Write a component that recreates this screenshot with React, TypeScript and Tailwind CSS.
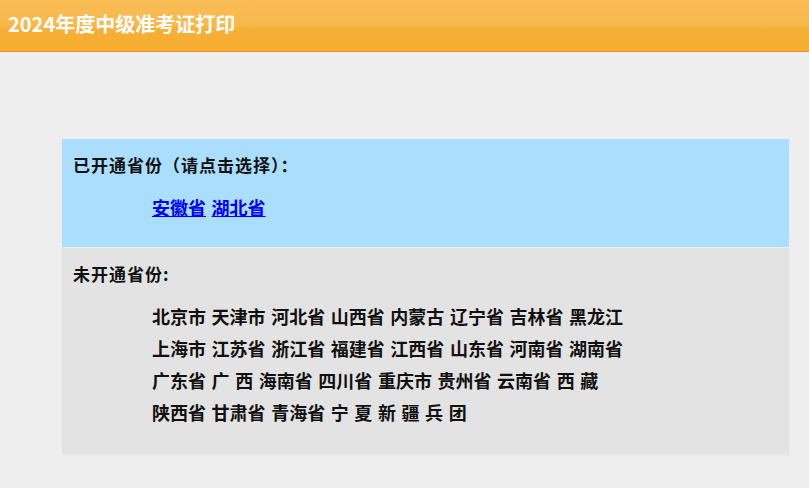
const font = { fontFamily: '"Noto Sans CJK SC", "Noto Sans", sans-serif' };

const opened = ["安徽省", "湖北省"];

const closedRows = [
  "北京市 天津市 河北省 山西省 内蒙古 辽宁省 吉林省 黑龙江",
  "上海市 江苏省 浙江省 福建省 江西省 山东省 河南省 湖南省",
  "广东省 广 西 海南省 四川省 重庆市 贵州省 云南省 西 藏",
  "陕西省 甘肃省 青海省 宁 夏 新 疆 兵 团",
];

export default function App() {
  return (
    <div className="min-h-[488px] w-full bg-[#eeeeee]" style={font}>
      {/* Header */}
      <header className="h-[52px] border-b border-[#e8961c] bg-[linear-gradient(to_bottom,#f9bd56_0%,#f8b84c_50%,#f6b036_56%,#f5ad30_100%)]">
        <div className="flex h-[51px] items-center pb-[3px] pl-2">
          <h1 className="text-[20px] font-bold text-white">2024年度中级准考证打印</h1>
        </div>
      </header>

      <div className="pl-[62px] pr-[20px] pt-[87px]">
        {/* Opened provinces */}
        <section className="h-[108px] bg-[#abdefd] px-[11px] pt-[10px]">
          <div className="text-[17px] font-bold leading-[32px] tracking-[1px] text-[#111]">
            已开通省份（请点击选择）：
          </div>
          <div className="mt-[10px] pl-[79px] text-[18px] font-bold leading-[32px] [word-spacing:1.5px]">
            {opened.map((p, i) => (
              <span key={p}>
                {i > 0 && " "}
                <a href="#" className="text-[#0000ff] underline underline-offset-[1px]">
                  {p}
                </a>
              </span>
            ))}
          </div>
        </section>

        {/* Closed provinces */}
        <section className="mt-[1px] h-[207px] bg-[#e3e3e3] px-[11px] pt-[10px]">
          <div className="text-[17px] font-bold leading-[32px] tracking-[1px] text-[#111]">未开通省份:</div>
          <div className="mt-[10px] pl-[79px] text-[18px] font-bold leading-[32px] text-[#111] [word-spacing:1.5px]">
            {closedRows.map((r) => (
              <div key={r}>{r}</div>
            ))}
          </div>
        </section>
      </div>
    </div>
  );
}
